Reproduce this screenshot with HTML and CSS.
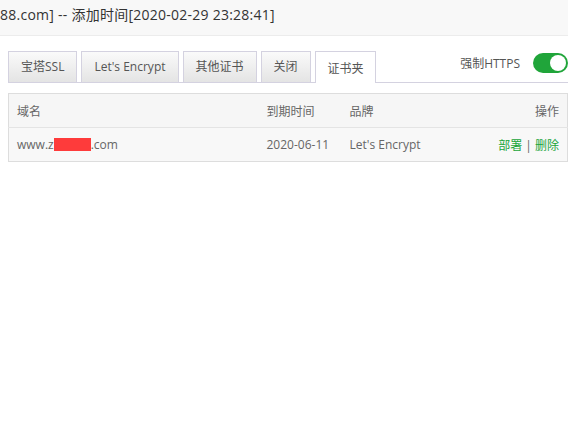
FILE: index.html
```html
<!DOCTYPE html>
<html>
<head>
<meta charset="utf-8">
<link rel="stylesheet" href="styles.css">
</head>
<body>
<div class="title">88.com] -- 添加时间[2020-02-29 23:28:41]</div>
<div class="content">
  <div class="tabbar">
    <div class="tabs">
      <div class="tab">宝塔SSL</div>
      <div class="tab">Let's Encrypt</div>
      <div class="tab">其他证书</div>
      <div class="tab">关闭</div>
      <div class="tab active">证书夹</div>
    </div>
    <div class="force">
      <span class="force-label">强制HTTPS</span>
      <span class="toggle"><span class="knob"></span></span>
    </div>
  </div>
  <table class="grid">
    <thead>
      <tr><th class="c1">域名</th><th class="c2">到期时间</th><th class="c3">品牌</th><th class="c4">操作</th></tr>
    </thead>
    <tbody>
      <tr>
        <td class="c1">www.z<span class="mask"></span>.com</td>
        <td class="c2">2020-06-11</td>
        <td class="c3">Let's Encrypt</td>
        <td class="c4"><a class="op">部署</a> | <a class="op">删除</a></td>
      </tr>
    </tbody>
  </table>
</div>
</body>
</html>
```
FILE: styles.css
```css
* { box-sizing: border-box; }
html, body { margin: 0; padding: 0; background: #fff; }
body {
  font-family: "Open Sans", "Noto Sans CJK SC", sans-serif;
  color: #555;
  font-size: 12px;
}
.title {
  height: 36px;
  background: #f8f8f8;
  border-bottom: 1px solid #ececec;
  font-size: 14px;
  letter-spacing: 0.25px;
  color: #333;
  line-height: 30px;
  white-space: nowrap;
}
.content { padding: 16px 0 0 8px; }
.tabbar {
  display: flex;
  justify-content: space-between;
  align-items: flex-end;
  border-bottom: 1px solid #d4d2e0;
  height: 31px;
}
.tabs { display: flex; gap: 4px; align-items: flex-end; }
.tab {
  height: 31px;
  line-height: 29px;
  padding: 0 12px;
  border: 1px solid #d4d2e0;
  border-bottom: none;
  background: linear-gradient(#fafafa, #e4e4e4);
  color: #555;
  font-size: 12px;
  flex: none;
}
.tab.active {
  background: #fff;
  height: 32px;
  margin-bottom: -1px;
  line-height: 33px;
  padding: 0 11px 0 12px;
  width: 61px;
}
.force {
  display: flex;
  align-items: center;
  height: 30px;
  padding-bottom: 8px;
}
.force-label { color: #555; font-size: 12px; margin-right: 13px; }
.toggle {
  width: 35px;
  height: 20px;
  border-radius: 10px;
  background: #20a53a;
  position: relative;
  display: inline-block;
}
.knob {
  position: absolute;
  right: 2px;
  top: 2px;
  width: 16px;
  height: 16px;
  border-radius: 50%;
  background: #fff;
}
.grid {
  margin-top: 10px;
  width: 560px;
  border-collapse: collapse;
  border: 1px solid #ddd;
}
.grid th, .grid td {
  height: 34px;
  padding: 0 8px;
  text-align: left;
  font-weight: normal;
  font-size: 12px;
  color: #666;
  background: #f6f6f6;
  white-space: nowrap;
}
.grid td { border-top: 1px solid #e4e4e4; background: #f8f8f8; }
.grid .c1 { width: 250px; }
.grid .c2 { width: 83px; }
.grid .c4 { text-align: right; }
.mask {
  display: inline-block;
  width: 37px;
  height: 13px;
  background: #fe3b3b;
  vertical-align: -2px;
}
.op { color: #20a53a; }
```
